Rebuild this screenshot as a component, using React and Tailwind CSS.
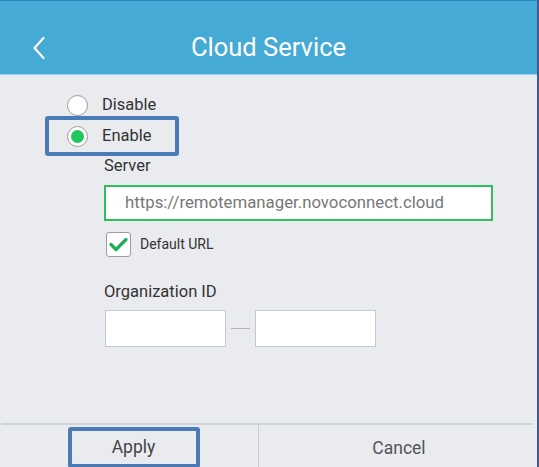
import React, { useState } from 'react';

const Radio = ({ checked }) => (
  <span className="flex h-[21px] w-[21px] items-center justify-center rounded-full border border-[#9a9a9a] bg-white">
    {checked && <span className="h-[13px] w-[13px] rounded-full bg-[#1ec75a]" />}
  </span>
);

const App = () => {
  const [mode, setMode] = useState('enable');
  const [useDefault, setUseDefault] = useState(true);

  return (
    <div
      className="flex h-[467px] w-[539px] flex-col overflow-hidden border-r-2 border-[#3d5a92] bg-[#e9ebef]"
      style={{ fontFamily: 'Roboto, "Noto Sans", sans-serif' }}
    >
      {/* header */}
      <div className="relative flex h-[75px] shrink-0 items-center justify-center border-t border-b border-t-[#2f86bd] border-b-[#93d1ea] bg-[#45aad5]">
        <button className="absolute left-[30px] top-[34px] flex h-[26px] w-[18px] items-center justify-center">
          <svg width="14" height="24" viewBox="0 0 14 24" fill="none">
            <path d="M11.5 2 L2.5 12 L11.5 22" stroke="white" strokeWidth="2.2" strokeLinecap="round" strokeLinejoin="round" />
          </svg>
        </button>
        <h1 className="pt-[20px] text-[25.5px] leading-none text-white">Cloud Service</h1>
      </div>

      {/* body */}
      <div className="flex-1 pl-[45px]">
        <div
          className="mt-[20px] flex h-[20px] cursor-pointer items-center gap-[14px] pl-[22px]"
          onClick={() => setMode('disable')}
        >
          <Radio checked={mode === 'disable'} />
          <span className="text-[16.5px] text-[#333]">Disable</span>
        </div>
        <div
          className="mt-[1px] flex h-[40px] w-[134px] cursor-pointer items-center gap-[14px] rounded-[3px] border-4 border-[#4a7bb6] pl-[18px]"
          onClick={() => setMode('enable')}
        >
          <Radio checked={mode === 'enable'} />
          <span className="text-[16.5px] text-[#333]">Enable</span>
        </div>

        <div className="ml-[59px] w-[389px]">
          <div className="h-[20px] text-[16.5px] leading-[20px] text-[#333]">Server</div>
          <div className="mt-[9px] flex h-[36px] items-center border-2 border-[#2fbf5c] bg-white pl-[19px] text-[16.8px] text-[#777]">
            https://remotemanager.novoconnect.cloud
          </div>
          <div
            className="mt-[11px] flex cursor-pointer items-center gap-[9px]"
            onClick={() => setUseDefault(!useDefault)}
          >
            <span className="ml-[2px] flex h-[25px] w-[25px] items-center justify-center rounded-[3px] border border-[#9c9c9c] bg-white">
              {useDefault && (
                <svg width="19" height="15" viewBox="0 0 19 15" fill="none">
                  <path d="M2 7.5 L7 12.5 L17 2.5" stroke="#1fae57" strokeWidth="3.2" strokeLinecap="round" strokeLinejoin="round" />
                </svg>
              )}
            </span>
            <span className="text-[14px] text-[#333]">Default URL</span>
          </div>

          <div className="mt-[25px] h-[20px] text-[16.5px] leading-[20px] text-[#333]">Organization ID</div>
          <div className="mt-[8px] flex items-center pl-[1px]">
            <div className="h-[37px] w-[121px] border border-[#c3c9d0] bg-white" />
            <div className="mx-[5px] h-px w-[19px] bg-[#b0b4b8]" />
            <div className="h-[37px] w-[121px] border border-[#c3c9d0] bg-white" />
          </div>
        </div>
      </div>

      {/* footer */}
      <div className="ml-[1px] mr-[4px] flex h-[44px] shrink-0 border-t-2 border-[#cdd3d9]">
        <div className="flex w-[257px] items-start justify-center pt-[2px] pl-[8px]">
          <button className="h-[41px] w-[132px] rounded-[3px] border-4 border-[#4a7bb6] text-[17.5px] text-[#444]">
            Apply
          </button>
        </div>
        <div className="flex flex-1 items-center justify-center border-l border-[#c5ccd3] pt-[5px] pl-[6px] text-[17.5px] text-[#555]">
          Cancel
        </div>
      </div>
    </div>
  );
};

export default App;
